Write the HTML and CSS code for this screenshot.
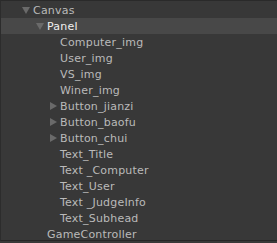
FILE: index.html
```html
<!DOCTYPE html>
<html lang="en">

<head>
    <meta charset="UTF-8" />
    <link rel="stylesheet" href="styles.css">
    <title>Hierarchy</title>
</head>

<body>
    <div class="hierarchy">
        <div class="row lvl0"><span class="arrow down"></span>Canvas</div>
        <div class="row lvl1 selected"><span class="arrow down"></span>Panel</div>
        <div class="row lvl2"><span class="arrow none"></span>Computer_img</div>
        <div class="row lvl2"><span class="arrow none"></span>User_img</div>
        <div class="row lvl2"><span class="arrow none"></span>VS_img</div>
        <div class="row lvl2"><span class="arrow none"></span>Winer_img</div>
        <div class="row lvl2"><span class="arrow right"></span>Button_jianzi</div>
        <div class="row lvl2"><span class="arrow right"></span>Button_baofu</div>
        <div class="row lvl2"><span class="arrow right"></span>Button_chui</div>
        <div class="row lvl2"><span class="arrow none"></span>Text_Title</div>
        <div class="row lvl2"><span class="arrow none"></span>Text _Computer</div>
        <div class="row lvl2"><span class="arrow none"></span>Text_User</div>
        <div class="row lvl2"><span class="arrow none"></span>Text _JudgeInfo</div>
        <div class="row lvl2"><span class="arrow none"></span>Text_Subhead</div>
        <div class="row lvl1"><span class="arrow none"></span>GameController</div>
    </div>
</body>

</html>
```

FILE: styles.css
```css
body {
    margin: 0;
    background: #383838;
    font-family: "DejaVu Sans", sans-serif;
    font-size: 11px;
    letter-spacing: 0.2px;
    color: #bababa;
    overflow: hidden;
}

.hierarchy {
    height: 238px;
    padding-top: 1px;
    border-top: 1px solid #2a2a2a;
    border-left: 1px solid #2c2c2c;
    border-bottom: 1px solid #262626;
    background: #383838;
    box-sizing: content-box;
}

.row {
    display: flex;
    align-items: center;
    height: 16px;
    white-space: nowrap;
}

.row.selected {
    background: #484848;
    color: #f0f0f0;
}

.lvl0 { padding-left: 20px; }
.lvl1 { padding-left: 34px; }
.lvl2 { padding-left: 47px; }

.arrow {
    width: 12px;
    height: 16px;
    flex: none;
    position: relative;
}

.arrow.down::before {
    content: "";
    position: absolute;
    left: 1px;
    top: 5px;
    border-left: 4px solid transparent;
    border-right: 4px solid transparent;
    border-top: 7px solid #6a6a6a;
}

.arrow.right::before {
    content: "";
    position: absolute;
    left: 2px;
    top: 4px;
    border-top: 4px solid transparent;
    border-bottom: 4px solid transparent;
    border-left: 7px solid #6a6a6a;
}
```
